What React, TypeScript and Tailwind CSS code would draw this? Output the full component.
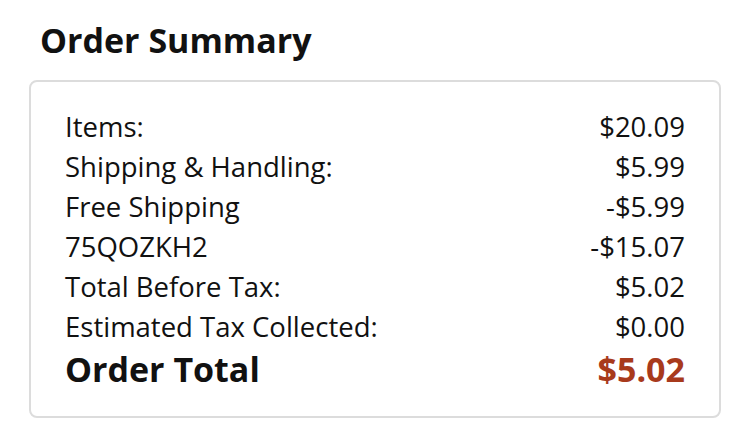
export default function App() {
  const rows = [
    ['Items:', '$20.09'],
    ['Shipping & Handling:', '$5.99'],
    ['Free Shipping', '-$5.99'],
    ['75QOZKH2', '-$15.07'],
    ['Total Before Tax:', '$5.02'],
    ['Estimated Tax Collected:', '$0.00'],
  ]

  return (
    <div className="w-[750px] h-[448px] bg-white px-[29px] pt-[18px] text-[#111111] font-['Open_Sans',sans-serif]">
      <h1 className="ml-[11px] text-[34px] leading-[44px] font-bold">Order Summary</h1>
      <div className="mt-[18px] border-2 border-[#dcdcdc] rounded-[8px] px-[34px] pt-[25px] h-[338px]">
        {rows.map(([label, value]) => (
          <div key={label} className="flex justify-between text-[27.5px] leading-[40px]">
            <span>{label}</span>
            <span>{value}</span>
          </div>
        ))}
        <div className="flex justify-between text-[34px] leading-[44px] font-bold">
          <span>Order Total</span>
          <span className="text-[#a83a1c]">$5.02</span>
        </div>
      </div>
    </div>
  )
}
